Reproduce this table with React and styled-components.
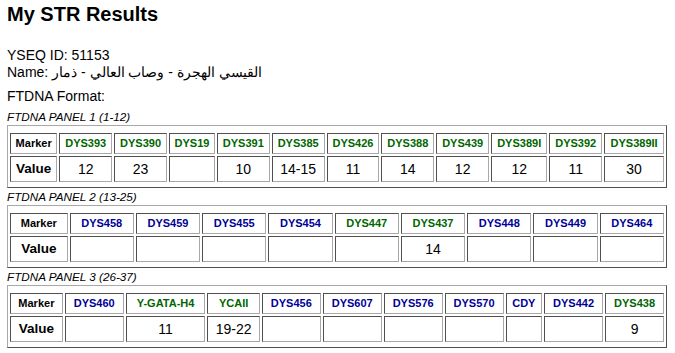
import styled, { createGlobalStyle } from 'styled-components';

const GlobalStyle = createGlobalStyle`
  body {
    margin: 0;
    background: #fff;
    color: #000;
    font-family: "Liberation Sans", Arial, sans-serif;
  }
`;

const GREEN = '#006600';
const BLUE = '#000099';

const panels = [
  {
    title: 'FTDNA PANEL 1 (1-12)',
    markers: [
      ['DYS393', '12', GREEN],
      ['DYS390', '23', GREEN],
      ['DYS19', '', GREEN],
      ['DYS391', '10', GREEN],
      ['DYS385', '14-15', GREEN],
      ['DYS426', '11', GREEN],
      ['DYS388', '14', GREEN],
      ['DYS439', '12', GREEN],
      ['DYS389I', '12', GREEN],
      ['DYS392', '11', GREEN],
      ['DYS389II', '30', GREEN],
    ],
  },
  {
    title: 'FTDNA PANEL 2 (13-25)',
    markers: [
      ['DYS458', '', BLUE],
      ['DYS459', '', BLUE],
      ['DYS455', '', BLUE],
      ['DYS454', '', BLUE],
      ['DYS447', '', GREEN],
      ['DYS437', '14', GREEN],
      ['DYS448', '', BLUE],
      ['DYS449', '', BLUE],
      ['DYS464', '', BLUE],
    ],
  },
  {
    title: 'FTDNA PANEL 3 (26-37)',
    markers: [
      ['DYS460', '', BLUE],
      ['Y-GATA-H4', '11', GREEN],
      ['YCAII', '19-22', GREEN],
      ['DYS456', '', BLUE],
      ['DYS607', '', BLUE],
      ['DYS576', '', BLUE],
      ['DYS570', '', BLUE],
      ['CDY', '', BLUE],
      ['DYS442', '', BLUE],
      ['DYS438', '9', GREEN],
    ],
  },
];

const Page = styled.div`
  padding: 3px 8px 0 7px;
`;

const Title = styled.h2`
  margin: 0 0 21px;
  font-size: 20px;
  line-height: 23px;
  font-weight: bold;
`;

const Info = styled.p`
  margin: 0 0 ${(p) => p.$gap || 7}px;
  font-size: 14px;
  line-height: 17px;
`;

const PanelTitle = styled.div`
  margin: 2px 0 2px;
  font-size: 11.7px;
  line-height: 13px;
  font-style: italic;
`;

const Panel = styled.section`
  margin-bottom: 2px;
`;

const Table = styled.table`
  width: 100%;
  border-collapse: separate;
  border-spacing: 2px;
  padding: 5px 0 3px;
  border: 1px solid;
  border-color: #a8a8a8 #505050 #505050 #a8a8a8;
`;

const Cell = styled.td`
  border: 1px solid;
  border-color: #505050 #a8a8a8 #a8a8a8 #505050;
  text-align: center;
  padding: ${(p) => (p.$head ? '3px 2px' : '4px 2px')};
  font-size: ${(p) => (p.$head ? '11px' : '14px')};
  line-height: ${(p) => (p.$head ? '13px' : '16px')};
  font-weight: ${(p) => (p.$bold ? 'bold' : 'normal')};
  color: ${(p) => p.$color || '#000'};
  white-space: nowrap;
`;

const ValueLabel = styled(Cell)`
  font-size: 13.5px;
`;

export default function App() {
  return (
    <Page>
      <GlobalStyle />
      <Title>My STR Results</Title>
      <Info>
        YSEQ ID: 51153
        <br />
        Name: القيسي الهجرة - وصاب العالي - ذمار
      </Info>
      <Info $gap={5}>FTDNA Format:</Info>
      {panels.map((panel) => (
        <Panel key={panel.title}>
          <PanelTitle>{panel.title}</PanelTitle>
          <Table>
            <tbody>
              <tr>
                <Cell $head $bold>Marker</Cell>
                {panel.markers.map(([name, , color]) => (
                  <Cell key={name} $head $bold $color={color}>
                    {name}
                  </Cell>
                ))}
              </tr>
              <tr>
                <ValueLabel $bold>Value</ValueLabel>
                {panel.markers.map(([name, value]) => (
                  <Cell key={name}>{value}</Cell>
                ))}
              </tr>
            </tbody>
          </Table>
        </Panel>
      ))}
    </Page>
  );
}
